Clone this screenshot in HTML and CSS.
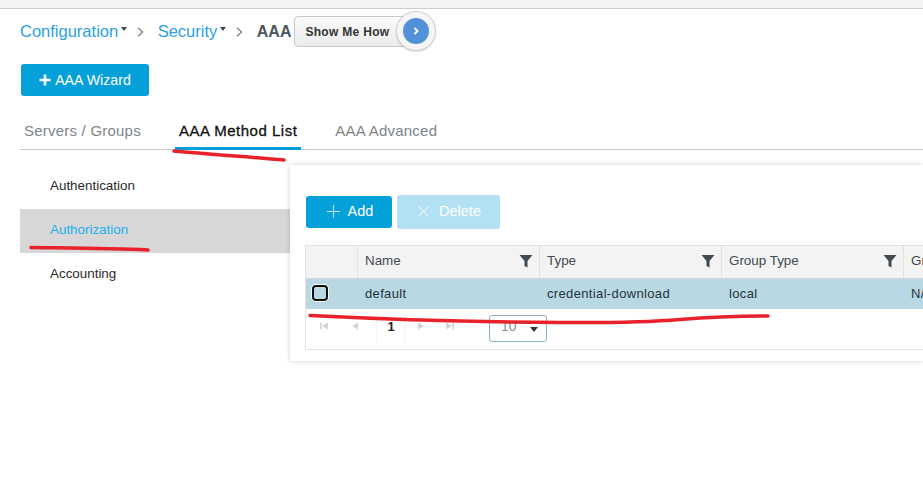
FILE: index.html
```html
<!DOCTYPE html>
<html lang="en">
<head>
<meta charset="utf-8">
<title>AAA Method List</title>
<link rel="stylesheet" href="styles.css">
</head>
<body>
<div class="strip"></div>
<div class="page">
  <nav class="crumbs">
    <a class="crumb">Configuration<i class="caret"></i></a>
    <svg class="sep" width="7" height="10" viewBox="0 0 7 10"><path d="M1 0.8L5.500 5L1 9.200"/></svg>
    <a class="crumb">Security<i class="caret"></i></a>
    <svg class="sep" width="7" height="10" viewBox="0 0 7 10"><path d="M1 0.8L5.500 5L1 9.200"/></svg>
    <span class="current">AAA</span>
    <div class="howto">
      <span class="howto-label">Show Me How</span>
      <span class="howto-ring"><span class="howto-dot"><svg width="8" height="10" viewBox="0 0 8 10"><path d="M2.5 2 L5.5 5 L2.5 8" fill="none" stroke="#fff" stroke-width="1.8"/></svg></span></span>
    </div>
  </nav>
  <button class="btn wizard"><svg width="12" height="12" viewBox="0 0 12 12"><path d="M6 0.5V11.5M0.5 6H11.5" stroke="#fff" stroke-width="2.6"/></svg>AAA Wizard</button>
  <div class="tabs">
    <span class="tab">Servers / Groups</span>
    <span class="tab active">AAA Method List</span>
    <span class="tab">AAA Advanced</span>
  </div>
  <div class="main">
    <ul class="side">
      <li>Authentication</li>
      <li class="selected">Authorization</li>
      <li>Accounting</li>
    </ul>
    <section class="panel">
      <div class="actions">
        <button class="btn add"><svg width="15" height="15" viewBox="0 0 15 15"><path d="M7.5 1V14M1 7.5H14" stroke="#cfeaf6" stroke-width="1"/></svg>Add</button>
        <button class="btn delete"><svg width="13" height="13" viewBox="0 0 13 13"><path d="M1.500 1.500L11.500 11.500M11.500 1.500L1.500 11.500" stroke="#fff" stroke-width="1"/></svg>Delete</button>
      </div>
      <div class="grid">
        <div class="row head">
          <div class="cell check"></div>
          <div class="cell col">Name<svg class="funnel" viewBox="0 0 14 14"><path d="M0.5 1H13.5L8.5 7V13.5L5.5 12V7Z"/></svg></div>
          <div class="cell col">Type<svg class="funnel" viewBox="0 0 14 14"><path d="M0.5 1H13.5L8.5 7V13.5L5.5 12V7Z"/></svg></div>
          <div class="cell col">Group Type<svg class="funnel" viewBox="0 0 14 14"><path d="M0.5 1H13.5L8.5 7V13.5L5.5 12V7Z"/></svg></div>
          <div class="cell last">Group</div>
        </div>
        <div class="row body">
          <div class="cell check"><span class="box"></span></div>
          <div class="cell col">default</div>
          <div class="cell col">credential-download</div>
          <div class="cell col">local</div>
          <div class="cell last">N/A</div>
        </div>
        <div class="pager">
          <svg class="pg first" viewBox="0 0 10 10"><path d="M1 1.5H2.5V8.5H1ZM9 1.5V8.5L3 5Z"/></svg>
          <svg class="pg prev" viewBox="0 0 10 10"><path d="M8 1.5V8.5L2 5Z"/></svg>
          <span class="page-num">1</span>
          <svg class="pg next" viewBox="0 0 10 10"><path d="M2 1.5V8.5L8 5Z"/></svg>
          <svg class="pg end" viewBox="0 0 10 10"><path d="M1 1.5V8.5L7 5ZM7.5 1.5H9V8.5H7.5Z"/></svg>
          <div class="size"><span>10</span><i class="size-caret"></i></div>
        </div>
      </div>
    </section>
  </div>
</div>
<svg class="ink" width="923" height="489" viewBox="0 0 923 489">
  <path d="M174 151 C205 154 250 157 284 160"/>
  <path d="M31 247.500 C70 248 110 248 148 250"/>
  <path d="M310 315.500 C380 319 460 322 560 322.500 C620 323 650 322 680 319.500 C710 317 740 316 768 316"/>
</svg>
</body>
</html>
```
FILE: styles.css
```css
* { box-sizing: border-box; }
html, body { margin: 0; padding: 0; }
body {
  width: 923px;
  height: 489px;
  overflow: hidden;
  background: #fff;
  font-family: "Liberation Sans", Arial, sans-serif;
  position: relative;
}
.strip {
  height: 9px;
  background: #f4f4f4;
  border-bottom: 1px solid #cfcfcf;
}
.page { padding-left: 20px; }
.crumbs {
  display: flex;
  align-items: center;
  height: 45px;
  font-size: 16.5px;
}
.crumb { color: #2b9fe6; display: flex; align-items: center; }
.caret {
  width: 0;
  height: 0;
  margin: -6px 0 0 3px;
  border-left: 3.5px solid transparent;
  border-right: 3.5px solid transparent;
  border-top: 4px solid #3d4a55;
}
.sep {
  fill: none;
  stroke: #7b858c;
  stroke-width: 1.4;
  margin: 1px 14px 0 9.5px;
}
.current { color: #4a5560; font-weight: bold; font-size: 16px; }
.howto {
  display: flex;
  align-items: center;
  position: relative;
  width: 114px;
  height: 31px;
  margin-left: 3px;
  padding-left: 10px;
  background: linear-gradient(#fafafa, #ececec);
  border: 1px solid #c9c9c9;
  border-radius: 4px;
}
.howto-label { font-size: 12px; font-weight: bold; color: #333; letter-spacing: 0.3px; white-space: nowrap; }
.howto-ring {
  position: absolute;
  right: -29px;
  top: -6px;
  width: 40px;
  height: 40px;
  display: flex;
  align-items: center;
  justify-content: center;
  background: #f6f6f6;
  border: 1px solid #d0d0d0;
  border-radius: 50%;
  box-shadow: 0 1px 2px rgba(0,0,0,.15);
}
.howto-dot {
  width: 26px;
  height: 26px;
  display: flex;
  align-items: center;
  justify-content: center;
  background: #5291d8;
  border-radius: 50%;
}
.btn {
  display: flex;
  align-items: center;
  justify-content: center;
  border: 0;
  border-radius: 3px;
  color: #fff;
  font-family: inherit;
  font-size: 14px;
  padding: 0;
}
.wizard {
  width: 128px;
  height: 32px;
  margin: 10px 0 0 1px;
  gap: 4px;
  background: #04a0d9;
  font-size: 14.2px;
}
.tabs {
  display: flex;
  height: 54px;
  border-bottom: 1px solid #c8c8c8;
  font-size: 15px;
  letter-spacing: 0.22px;
  color: #7d8489;
}
.tab {
  display: flex;
  align-items: center;
  height: 54px;
  padding: 17px 4px 0;
  margin-right: 30px;
  white-space: nowrap;
  border-bottom: 3px solid transparent;
}
.tab.active {
  color: #111;
  letter-spacing: 0.5px;
  -webkit-text-stroke: 0.3px #111;
  border-bottom-color: #049fd9;
}
.main { display: flex; }
.side {
  list-style: none;
  width: 270px;
  margin: 15px 0 0;
  padding: 0;
  font-size: 13.4px;
  color: #2a2a2a;
}
.side li {
  display: flex;
  align-items: center;
  height: 44px;
  padding: 0 0 3px 30px;
}
.side li.selected { background: #d8d6d6; color: #19b2ef; }
.panel {
  width: 633px;
  height: 196px;
  margin-top: 15px;
  padding: 30px 0 0 15px;
  background: #fff;
  box-shadow: 0 0 5px rgba(0,0,0,.2);
}
.actions { display: flex; align-items: center; gap: 5px; padding-left: 1px; height: 34px; }
.add {
  width: 86px;
  height: 32px;
  gap: 7px;
  background: #04a0d9;
  padding: 0 0 2px 1px;
  font-size: 14.5px;
}
.delete {
  width: 103px;
  height: 34px;
  gap: 9px;
  background: #b3e1f4;
  padding: 0 0 2px 1px;
  font-size: 14.5px;
}
.grid {
  margin-top: 16px;
  width: 640px;
  height: 105px;
  border: 1px solid #e2e2e2;
  font-size: 13px;
}
.row { display: flex; }
.row.head {
  height: 33px;
  background: #f3f3f3;
  border-bottom: 1px solid #d5d5d5;
  color: #3f4a52;
  font-size: 13.4px;
}
.head .cell { padding-bottom: 3px; }
.row.body { height: 30px; background: #b8d9e4; color: #27323a; letter-spacing: 0.35px; }
.body .cell { padding-bottom: 2px; }
.cell { display: flex; align-items: center; position: relative; flex: none; }
.check { width: 52px; padding-left: 6px; }
.head .check, .head .col { border-right: 1px solid #e2e2e2; }
.col { width: 182px; padding-left: 7px; }
.last { padding-left: 7px; white-space: nowrap; }
.funnel {
  position: absolute;
  right: 6px;
  top: 8px;
  width: 14px;
  height: 14px;
  fill: #444b50;
}
.box {
  width: 16px;
  height: 16px;
  background: #b8d9e4;
  border: 2px solid #111;
  border-radius: 4px;
  box-shadow: 0 0 0 1px #fff;
}
.pager { position: relative; height: 40px; }
.pg { position: absolute; top: 12px; width: 10px; height: 10px; fill: #d2d2d2; }
.first { left: 13px; }
.prev { left: 44px; }
.next { left: 110px; }
.end { left: 139px; }
.page-num {
  position: absolute;
  left: 70px;
  width: 30px;
  height: 30px;
  top: 4px;
  display: flex;
  align-items: flex-start;
  justify-content: center;
  padding-top: 6px;
  font-size: 13px;
  font-weight: bold;
  color: #222;
  border-left: 1px solid #f4f4f4;
  border-right: 1px solid #f4f4f4;
}
.size {
  position: absolute;
  left: 183px;
  top: 6px;
  width: 58px;
  height: 27px;
  display: flex;
  align-items: center;
  padding: 0 0 5px 11px;
  font-size: 14px;
  color: #8a9095;
  border: 1px solid #8fb0c2;
  border-radius: 3px;
}
.size-caret {
  margin: 6px 0 0 13px;
  width: 0;
  height: 0;
  border-left: 4px solid transparent;
  border-right: 4px solid transparent;
  border-top: 5px solid #2b3a45;
}
.ink {
  position: absolute;
  left: 0;
  top: 0;
  pointer-events: none;
}
.ink path {
  fill: none;
  stroke: #e8212a;
  stroke-width: 3.5;
  stroke-linecap: round;
}
```
